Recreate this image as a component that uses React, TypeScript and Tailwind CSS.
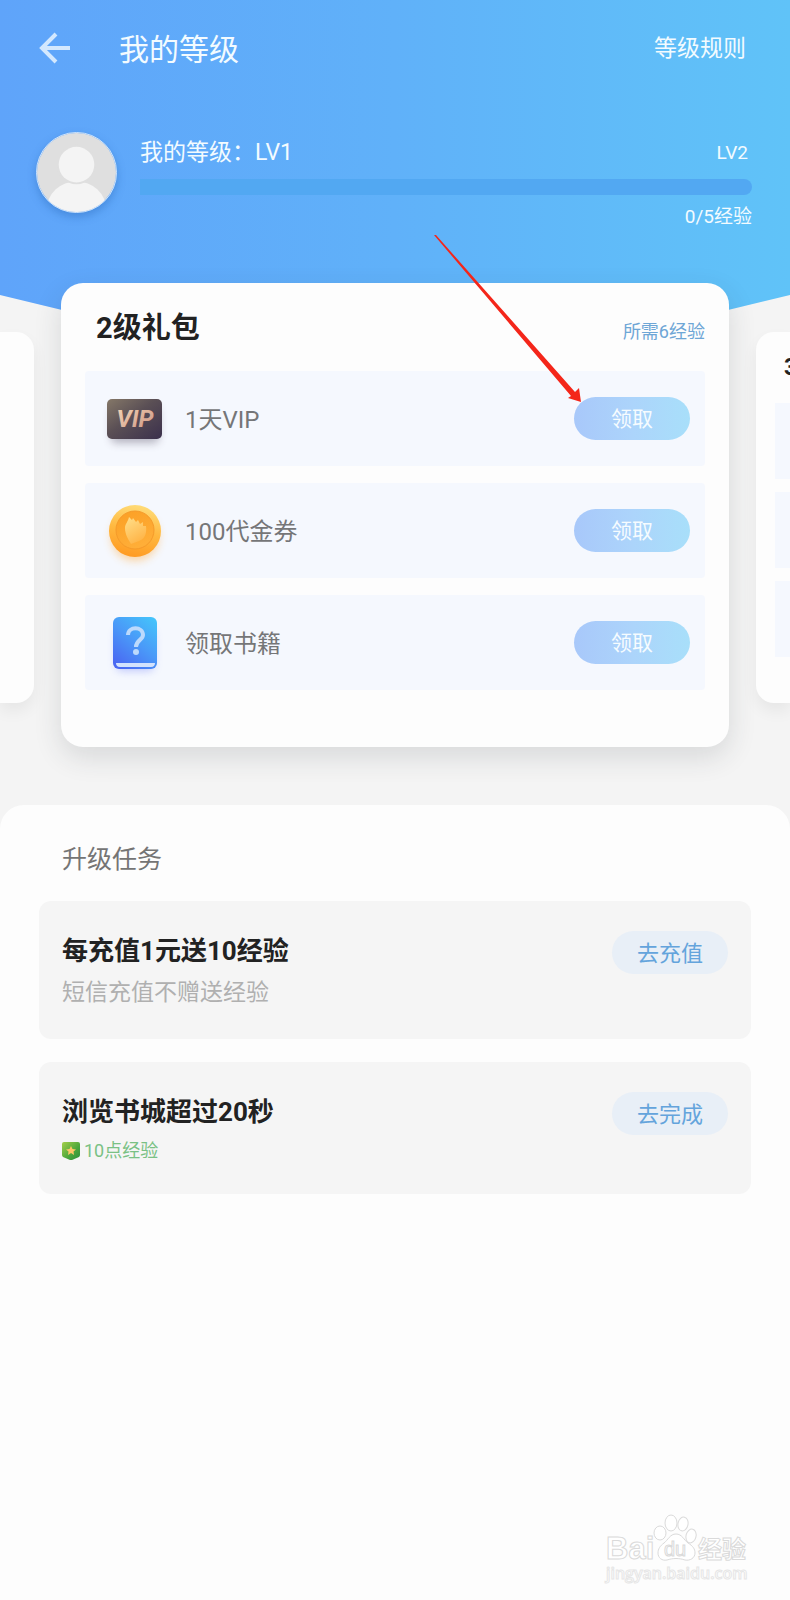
import React from "react";

type Gift = {
  id: string;
  name: string;
  icon: React.ReactNode;
};

type Task = {
  id: string;
  title: string;
  note?: string;
  reward?: string;
  action: string;
};

const VipIcon = () => (
  <svg viewBox="0 0 64 64" className="size-16 overflow-visible" aria-hidden="true">
    <defs>
      <linearGradient id="vip-bg" x1="0" y1="0" x2="1" y2="1">
        <stop offset="0" stopColor="#857868" />
        <stop offset="0.45" stopColor="#5a4f55" />
        <stop offset="1" stopColor="#3b304c" />
      </linearGradient>
      <linearGradient id="vip-text" x1="0" y1="0" x2="1" y2="1">
        <stop offset="0" stopColor="#f6d9b8" />
        <stop offset="1" stopColor="#c98f80" />
      </linearGradient>
      <filter id="soft" x="-50%" y="-50%" width="200%" height="200%">
        <feGaussianBlur stdDeviation="4" />
      </filter>
    </defs>
    <rect x="8" y="20" width="48" height="36" rx="5" fill="#3b304c" opacity="0.35" filter="url(#soft)" />
    <rect x="4" y="12" width="55" height="40" rx="5" fill="url(#vip-bg)" />
    <text
      x="32"
      y="40"
      textAnchor="middle"
      fontFamily="Roboto, sans-serif"
      fontSize="24"
      fontWeight="700"
      fontStyle="italic"
      fill="url(#vip-text)"
    >
      VIP
    </text>
  </svg>
);

const CoinIcon = () => (
  <svg viewBox="0 0 64 64" className="size-16 overflow-visible" aria-hidden="true">
    <defs>
      <linearGradient id="coin-rim" x1="0.6" y1="0" x2="0.4" y2="1">
        <stop offset="0" stopColor="#ffdc78" />
        <stop offset="0.5" stopColor="#ffb83f" />
        <stop offset="1" stopColor="#ff9a22" />
      </linearGradient>
      <linearGradient id="coin-face" x1="0" y1="0" x2="0.4" y2="1">
        <stop offset="0" stopColor="#fb9f24" />
        <stop offset="1" stopColor="#ffae38" />
      </linearGradient>
      <linearGradient id="coin-mark" x1="0" y1="0" x2="0.5" y2="1">
        <stop offset="0" stopColor="#ffe08c" />
        <stop offset="1" stopColor="#ffb548" />
      </linearGradient>
    </defs>
    <circle cx="32" cy="38" r="24" fill="#ffa93a" opacity="0.45" filter="url(#soft)" />
    <circle cx="32" cy="32" r="26" fill="url(#coin-rim)" />
    <circle cx="32" cy="31" r="19" fill="url(#coin-face)" stroke="#f59a2a" strokeWidth="1" />
    <path
      d="M26 18 L29 21 L30 19 L33 23 L35 21 L37 25 L40 23 L40 27 L43 27 C44 34 42 40 36 42 L28 45 C25 40 22 35 22 29 C22 25 25 23 26 18 Z"
      fill="url(#coin-mark)"
    />
  </svg>
);

const BookIcon = () => (
  <svg viewBox="0 0 64 64" className="size-16 overflow-visible" aria-hidden="true">
    <defs>
      <linearGradient id="book-bg" x1="0.9" y1="0" x2="0.2" y2="1">
        <stop offset="0" stopColor="#44c4fb" />
        <stop offset="0.5" stopColor="#4a99f8" />
        <stop offset="1" stopColor="#4a68f2" />
      </linearGradient>
    </defs>
    <rect x="13" y="18" width="38" height="42" rx="6" fill="#5a6cf6" opacity="0.35" filter="url(#soft)" />
    <rect x="10" y="6" width="44" height="52" rx="6" fill="url(#book-bg)" />
    <path d="M13 52 H52 C52 54 51 56 48 56 H17 C14 56 13 54 13 52 Z" fill="#d3e2fd" />
    <path d="M25 24 C25 15 40 15 40 24 C40 29 33 29 33 36" fill="none" stroke="#bcd9fc" strokeWidth="4" />
    <circle cx="33" cy="41" r="3" fill="#bcd9fc" />
  </svg>
);

const AvatarIcon = () => (
  <svg viewBox="0 0 80 80" className="size-full rounded-full" aria-hidden="true">
    <rect width="80" height="80" fill="#dfdfdf" />
    <ellipse cx="40" cy="77" rx="30" ry="28" fill="#f4f4f4" />
    <circle cx="40" cy="32" r="20" fill="#dfdfdf" />
    <circle cx="40" cy="32" r="18" fill="#f4f4f4" />
  </svg>
);

const MedalIcon = () => (
  <svg viewBox="0 0 18 18" className="size-[18px]" aria-hidden="true">
    <defs>
      <linearGradient id="medal-bg" x1="0" y1="0" x2="1" y2="1">
        <stop offset="0" stopColor="#a5cf48" />
        <stop offset="0.6" stopColor="#4aa63c" />
        <stop offset="1" stopColor="#2c8f3a" />
      </linearGradient>
    </defs>
    <path d="M0 2 Q0 0 2 0 H16 Q18 0 18 2 V13 Q18 14 17 15 L10 18 Q9 18 8 18 L1 15 Q0 14 0 13 Z" fill="url(#medal-bg)" />
    <path d="M9 4 L10.5 7 L14 7.5 L11.5 9.5 L12 13 L9 11 L6 13 L6.5 9.5 L4 7.5 L7.5 7 Z" fill="#fcc768" />
  </svg>
);

// Red pointer that leads to the first claim button
const Pointer = () => (
  <svg
    viewBox="0 0 147 167"
    className="pointer-events-none absolute -left-[140px] -top-[162px] h-[167px] w-[147px]"
    aria-hidden="true"
  >
    <path d="M0 0 L2 0 L141 157 L145 153 L147 167 L134 163 L137 161 Z" fill="#f4261a" />
  </svg>
);

const Watermark = () => (
  <svg viewBox="0 0 150 76" className="h-[76px] w-[150px]" role="img" aria-label="Baidu 经验">
    <g fill="#ffffff" stroke="#dadada" strokeWidth="1">
      <text x="5" y="49" fontFamily="Liberation Sans, sans-serif" fontSize="31" fontWeight="700">
        Bai
      </text>
      <path d="M75 24 C81 24 83 30 87 33 C92 36 94 39 94 43 C94 48 89 51 84 50 C78 48 72 48 66 50 C61 51 57 48 57 43 C57 39 59 36 63 33 C67 30 69 24 75 24 Z" />
      <ellipse cx="59" cy="23" rx="6" ry="7" />
      <ellipse cx="70" cy="13" rx="6" ry="8" />
      <ellipse cx="82" cy="14" rx="5" ry="7" transform="rotate(12 82 14)" />
      <ellipse cx="90" cy="26" rx="5" ry="7" transform="rotate(15 90 26)" />
      <text x="63" y="46" fontFamily="Liberation Sans, sans-serif" fontSize="20">
        du
      </text>
      <text x="97" y="48" fontFamily="Noto Sans CJK SC, sans-serif" fontSize="24" fontWeight="700">
        经验
      </text>
    </g>
    <text x="5" y="69" fontFamily="Open Sans, sans-serif" fontSize="16" fontWeight="600" fill="#ffffff" stroke="#e6e6e6" strokeWidth="1">
      jingyan.baidu.com
    </text>
  </svg>
);

const gifts: Gift[] = [
  { id: "vip", name: "1天VIP", icon: <VipIcon /> },
  { id: "coin", name: "100代金券", icon: <CoinIcon /> },
  { id: "book", name: "领取书籍", icon: <BookIcon /> },
];

const tasks: Task[] = [
  { id: "recharge", title: "每充值1元送10经验", note: "短信充值不赠送经验", action: "去充值" },
  { id: "browse", title: "浏览书城超过20秒", reward: "10点经验", action: "去完成" },
];

export default function App() {
  return (
    <div className="flex min-h-screen flex-col overflow-x-hidden bg-[#f4f4f4] font-['Roboto','Noto_Sans_CJK_SC',sans-serif]">
      {/* Header */}
      <header className="bg-linear-to-r from-[#5fa4fa] via-[#60b1f9] to-[#60c3f8] pb-[79px] text-[#f3fbff] [clip-path:polygon(0_0,100%_0,100%_295px,calc(100%-62px)_310px,62px_310px,0_295px)]">
        <div className="flex h-24 items-center pl-[38px] pr-[44px]">
          <button aria-label="返回" className="mr-[48px]">
            <svg viewBox="0 0 33 32" className="h-8 w-[33px]" fill="none" stroke="#d3e8fe" strokeWidth="4" aria-hidden="true">
              <path d="M32 16 H4 M18 2 L4 16 L18 30" />
            </svg>
          </button>
          <h1 className="grow pt-0.5 text-[30px]">我的等级</h1>
          <a href="#rules" className="pt-0.5 text-[23px]">等级规则</a>
        </div>

        <div className="flex gap-[23px] pl-9 pr-[38px] pt-9">
          <div className="size-[81px] shrink-0 rounded-full border border-[#cfe3fa] shadow-[0_4px_8px_rgba(30,90,170,0.35)]">
            <AvatarIcon />
          </div>
          <div className="grow">
            <div className="flex justify-between leading-[42px]">
              <span className="text-[23px]">我的等级：LV1</span>
              <span className="pr-1 text-[19px]">LV2</span>
            </div>
            <div
              role="progressbar"
              aria-label="经验"
              aria-valuenow={0}
              aria-valuemin={0}
              aria-valuemax={5}
              className="mt-[5px] h-4 rounded-r-full bg-[#52a8f2]"
            />
            <p className="mt-2 text-right text-[19px] leading-7">0/5经验</p>
          </div>
        </div>
      </header>

      {/* Level gifts */}
      <main className="relative -mt-[27px] flex items-center gap-[27px]">
        <div className="mt-1 h-[371px] w-[34px] shrink-0 rounded-r-[18px] bg-[#fdfdfd] shadow-[0_8px_16px_rgba(0,0,0,0.06)]" />

        <section className="min-w-0 grow rounded-[22px] bg-[#fdfdfd] px-6 pb-[57px] shadow-[0_10px_28px_rgba(40,50,60,0.14)]">
          <div className="flex h-[88px] items-center justify-between pl-[11px] pt-1">
            <h2 className="text-[29px] font-bold text-[#222222]">2级礼包</h2>
            <span className="pt-1 text-[18px] text-[#6ea6d6]">所需6经验</span>
          </div>
          <ul className="flex flex-col gap-[17px]">
            {gifts.map((gift, index) => (
              <li key={gift.id} className="flex h-[95px] items-center rounded bg-[#f5f8fe] pl-[18px] pr-[15px]">
                {gift.icon}
                <span className="grow pl-[18px] pt-0.5 text-[24px] text-[#757678]">{gift.name}</span>
                <div className="relative">
                  <button className="h-[43px] w-[116px] rounded-full bg-linear-to-r from-[#a8c8fa] via-[#acd4fb] to-[#a8dffa] pt-0.5 text-[21px] text-[#f6fcff]">
                    领取
                  </button>
                  {index === 0 ? <Pointer /> : null}
                </div>
              </li>
            ))}
          </ul>
        </section>

        <section className="mt-1 h-[371px] w-[34px] shrink-0 overflow-hidden rounded-l-[18px] bg-[#fdfdfd] shadow-[0_8px_16px_rgba(0,0,0,0.06)]">
          <h2 className="pl-7 text-[23px] font-bold leading-[71px] whitespace-nowrap text-[#222222]">3级礼包</h2>
          <div className="flex flex-col gap-[13px] pl-[19px]">
            {gifts.map((gift) => (
              <div key={gift.id} className="h-[76px] bg-[#f5f8fe]" />
            ))}
          </div>
        </section>
      </main>

      {/* Tasks */}
      <section className="mt-[58px] flex grow flex-col rounded-t-[24px] bg-[#fdfdfd] px-[39px] pb-[14px]">
        <h2 className="pl-[23px] pt-7 text-[25px] leading-[54px] text-[#757575]">升级任务</h2>
        <ul className="mt-[14px] flex flex-col gap-[23px]">
          {tasks.map((task) => (
            <li key={task.id} className="flex items-start justify-between rounded-[12px] bg-[#f5f5f5] px-[23px] pb-7 pt-[30px]">
              <div>
                <h3 className="text-[26px] font-bold leading-10 text-[#222222]">{task.title}</h3>
                {task.note ? <p className="mt-1 text-[23px] leading-9 text-[#b0b0b0]">{task.note}</p> : null}
                {task.reward ? (
                  <p className="mt-1 flex items-center gap-1 text-[18px] leading-[30px] text-[#79c184]">
                    <MedalIcon />
                    {task.reward}
                  </p>
                ) : null}
              </div>
              <button className="h-[43px] w-[116px] rounded-full bg-[#e8eff7] pt-0.5 text-[22px] text-[#64a4dc]">
                {task.action}
              </button>
            </li>
          ))}
        </ul>
        <div className="mt-auto self-end">
          <Watermark />
        </div>
      </section>
    </div>
  );
}
